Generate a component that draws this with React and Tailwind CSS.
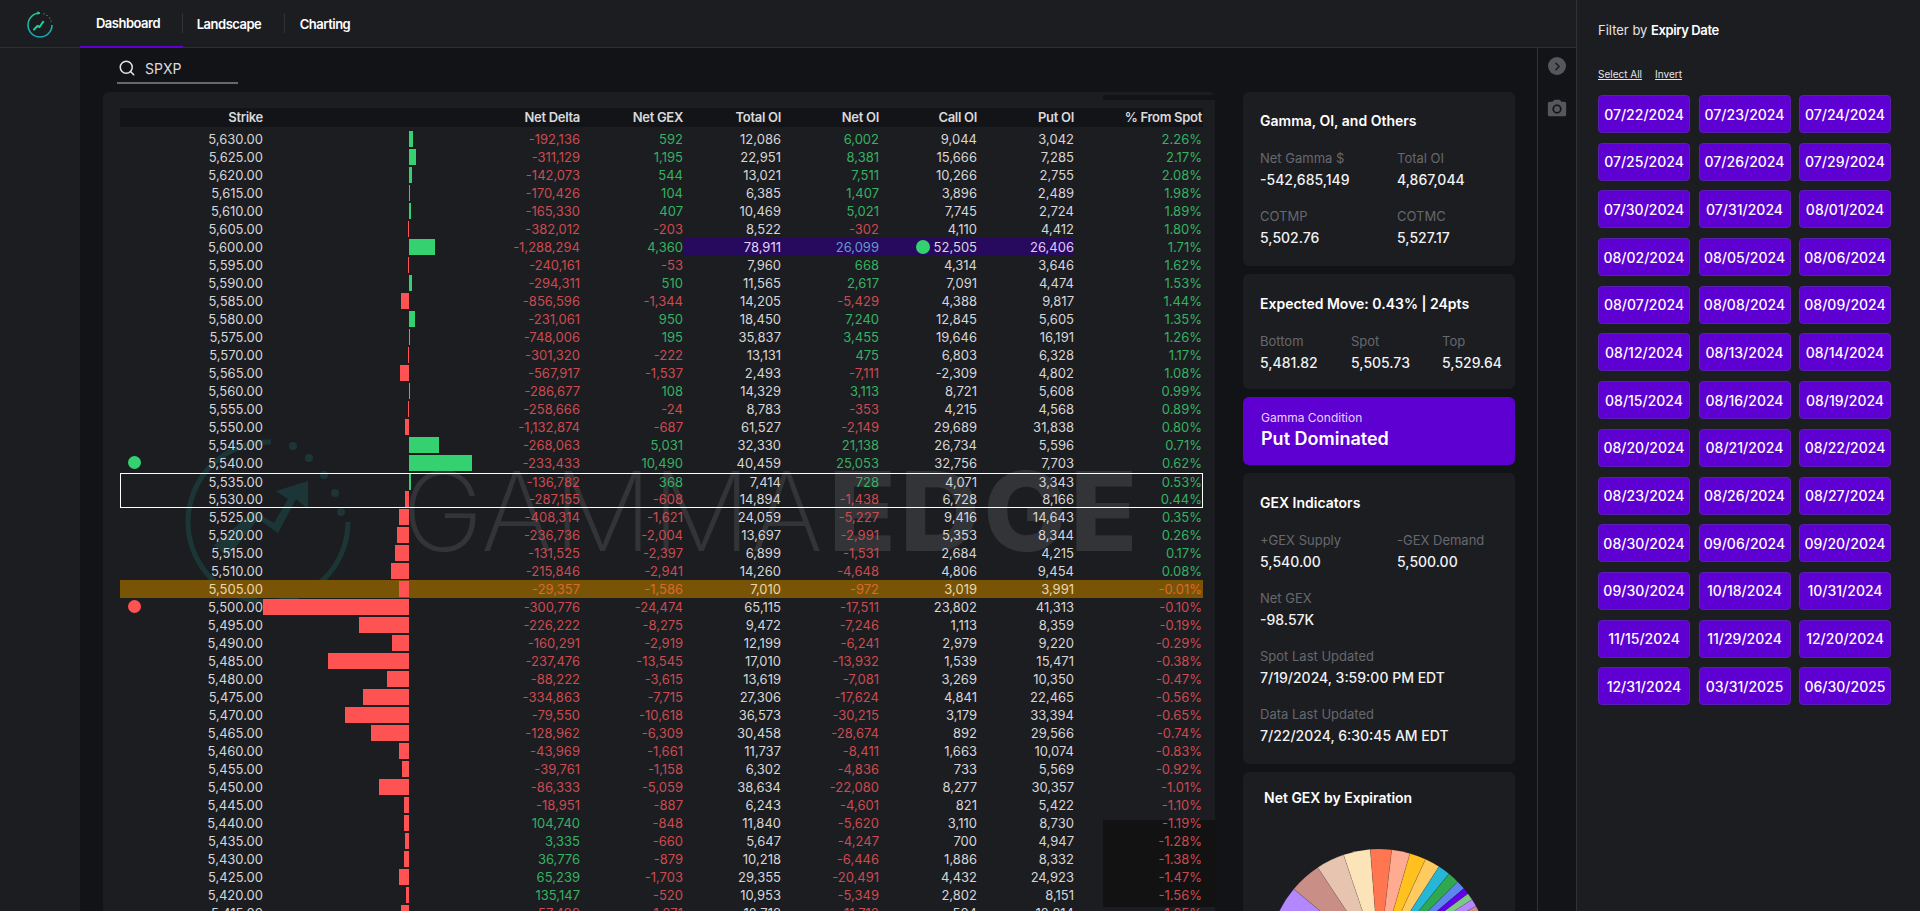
import { Search, ChevronRight } from 'lucide-react';
import { MdPhotoCamera } from 'react-icons/md';

const ROWS = [
  ['5,630.00', '-192,136', '592', '12,086', '6,002', '9,044', '3,042', '2.26%'],
  ['5,625.00', '-311,129', '1,195', '22,951', '8,381', '15,666', '7,285', '2.17%'],
  ['5,620.00', '-142,073', '544', '13,021', '7,511', '10,266', '2,755', '2.08%'],
  ['5,615.00', '-170,426', '104', '6,385', '1,407', '3,896', '2,489', '1.98%'],
  ['5,610.00', '-165,330', '407', '10,469', '5,021', '7,745', '2,724', '1.89%'],
  ['5,605.00', '-382,012', '-203', '8,522', '-302', '4,110', '4,412', '1.80%'],
  ['5,600.00', '-1,288,294', '4,360', '78,911', '26,099', '52,505', '26,406', '1.71%'],
  ['5,595.00', '-240,161', '-53', '7,960', '668', '4,314', '3,646', '1.62%'],
  ['5,590.00', '-294,311', '510', '11,565', '2,617', '7,091', '4,474', '1.53%'],
  ['5,585.00', '-856,596', '-1,344', '14,205', '-5,429', '4,388', '9,817', '1.44%'],
  ['5,580.00', '-231,061', '950', '18,450', '7,240', '12,845', '5,605', '1.35%'],
  ['5,575.00', '-748,006', '195', '35,837', '3,455', '19,646', '16,191', '1.26%'],
  ['5,570.00', '-301,320', '-222', '13,131', '475', '6,803', '6,328', '1.17%'],
  ['5,565.00', '-567,917', '-1,537', '2,493', '-7,111', '-2,309', '4,802', '1.08%'],
  ['5,560.00', '-286,677', '108', '14,329', '3,113', '8,721', '5,608', '0.99%'],
  ['5,555.00', '-258,666', '-24', '8,783', '-353', '4,215', '4,568', '0.89%'],
  ['5,550.00', '-1,132,874', '-687', '61,527', '-2,149', '29,689', '31,838', '0.80%'],
  ['5,545.00', '-268,063', '5,031', '32,330', '21,138', '26,734', '5,596', '0.71%'],
  ['5,540.00', '-233,433', '10,490', '40,459', '25,053', '32,756', '7,703', '0.62%'],
  ['5,535.00', '-136,782', '368', '7,414', '728', '4,071', '3,343', '0.53%'],
  ['5,530.00', '-287,155', '-608', '14,894', '-1,438', '6,728', '8,166', '0.44%'],
  ['5,525.00', '-408,314', '-1,621', '24,059', '-5,227', '9,416', '14,643', '0.35%'],
  ['5,520.00', '-236,736', '-2,004', '13,697', '-2,991', '5,353', '8,344', '0.26%'],
  ['5,515.00', '-131,525', '-2,397', '6,899', '-1,531', '2,684', '4,215', '0.17%'],
  ['5,510.00', '-215,846', '-2,941', '14,260', '-4,648', '4,806', '9,454', '0.08%'],
  ['5,505.00', '-29,357', '-1,586', '7,010', '-972', '3,019', '3,991', '-0.01%'],
  ['5,500.00', '-300,776', '-24,474', '65,115', '-17,511', '23,802', '41,313', '-0.10%'],
  ['5,495.00', '-226,222', '-8,275', '9,472', '-7,246', '1,113', '8,359', '-0.19%'],
  ['5,490.00', '-160,291', '-2,919', '12,199', '-6,241', '2,979', '9,220', '-0.29%'],
  ['5,485.00', '-237,476', '-13,545', '17,010', '-13,932', '1,539', '15,471', '-0.38%'],
  ['5,480.00', '-88,222', '-3,615', '13,619', '-7,081', '3,269', '10,350', '-0.47%'],
  ['5,475.00', '-334,863', '-7,715', '27,306', '-17,624', '4,841', '22,465', '-0.56%'],
  ['5,470.00', '-79,550', '-10,618', '36,573', '-30,215', '3,179', '33,394', '-0.65%'],
  ['5,465.00', '-128,962', '-6,309', '30,458', '-28,674', '892', '29,566', '-0.74%'],
  ['5,460.00', '-43,969', '-1,661', '11,737', '-8,411', '1,663', '10,074', '-0.83%'],
  ['5,455.00', '-39,761', '-1,158', '6,302', '-4,836', '733', '5,569', '-0.92%'],
  ['5,450.00', '-86,333', '-5,059', '38,634', '-22,080', '8,277', '30,357', '-1.01%'],
  ['5,445.00', '-18,951', '-887', '6,243', '-4,601', '821', '5,422', '-1.10%'],
  ['5,440.00', '104,740', '-848', '11,840', '-5,620', '3,110', '8,730', '-1.19%'],
  ['5,435.00', '3,335', '-660', '5,647', '-4,247', '700', '4,947', '-1.28%'],
  ['5,430.00', '36,776', '-879', '10,218', '-6,446', '1,886', '8,332', '-1.38%'],
  ['5,425.00', '65,239', '-1,703', '29,355', '-20,491', '4,432', '24,923', '-1.47%'],
  ['5,420.00', '135,147', '-520', '10,953', '-5,349', '2,802', '8,151', '-1.56%'],
  ['5,415.00', '-57,499', '-1,271', '12,718', '-11,710', '504', '12,214', '-1.65%'],
];

const DATES = [
  '07/22/2024', '07/23/2024', '07/24/2024', '07/25/2024', '07/26/2024', '07/29/2024',
  '07/30/2024', '07/31/2024', '08/01/2024', '08/02/2024', '08/05/2024', '08/06/2024',
  '08/07/2024', '08/08/2024', '08/09/2024', '08/12/2024', '08/13/2024', '08/14/2024',
  '08/15/2024', '08/16/2024', '08/19/2024', '08/20/2024', '08/21/2024', '08/22/2024',
  '08/23/2024', '08/26/2024', '08/27/2024', '08/30/2024', '09/06/2024', '09/20/2024',
  '09/30/2024', '10/18/2024', '10/31/2024', '11/15/2024', '11/29/2024', '12/20/2024',
  '12/31/2024', '03/31/2025', '06/30/2025',
];

// angle in degrees from 12 o'clock, then the slice colour up to the next angle
const SLICES = [
  [-72, '#b388ff'], [-50.2, '#c98e85'], [-33.5, '#e6c4b0'], [-18.6, '#fce4b8'],
  [-4.5, '#ff7650'], [6.6, '#ffab91'], [16.2, '#ffc020'], [24.8, '#ffca5f'],
  [32.7, '#26b6d6'], [39.1, '#2fa84f'], [45.1, '#5c85f0'], [49.9, '#6200ea'],
  [53.3, '#81c784'], [57, '#b388ff'], [61, '#c98e85'], [70, '#c98e85'],
];

const GRID = 'grid grid-cols-[143px_146px_91px_80px_103px_98px_98px_98px_97px_128px]';

function gexNumber(text) {
  return parseInt(text.replace(/,/g, ''), 10);
}

function pointOnPie(deg) {
  const rad = (deg * Math.PI) / 180;
  return `${111 + 111 * Math.sin(rad)} ${111 - 111 * Math.cos(rad)}`;
}

function Row({ row, className = '' }) {
  const [strike, delta, gex, total, netOi, call, put, pct] = row;
  const value = gexNumber(gex);
  const width = Math.max(1, Math.abs(value) * 0.006);
  const isCallWall = strike === '5,600.00';
  const isSpot = strike === '5,505.00';
  const plain = isSpot ? 'text-[#e8d8ac]' : 'text-[#d6d6d8]';
  const tone = (text) => {
    if (isSpot) return 'text-[#d96a2c]';
    return text.startsWith('-') ? 'text-[#cb4b50]' : 'text-[#35b261]';
  };
  const band = isCallWall ? 'bg-[#27095e]' : '';

  return (
    <div className={`${GRID} relative h-[18px] text-[13px] leading-[18px] text-right ${isSpot ? 'bg-[#7a5406]' : ''} ${className}`}>
      <div className={`flex items-center justify-between ${plain}`}>
        {strike === '5,540.00' && <span className="ml-[8px] -mt-[2px] h-[13px] w-[13px] rounded-full bg-[#35d170]" />}
        {strike === '5,500.00' && <span className="ml-[8px] -mt-[2px] h-[13px] w-[13px] rounded-full bg-[#ff5252]" />}
        <span className="ml-auto">{strike}</span>
      </div>
      <div className="flex items-center justify-end">
        {value < 0 && <div className="h-[16px] bg-[#ff5252]" style={{ width }} />}
      </div>
      <div className="flex items-center justify-start">
        {value > 0 && <div className="h-[16px] bg-[#35d170]" style={{ width }} />}
      </div>
      <div className={tone(delta)}>{delta}</div>
      <div className={tone(gex)}>{gex}</div>
      <div className={`${band} ${isCallWall ? 'text-[#e4d4f8]' : plain}`}>{total}</div>
      <div className={`${band} ${isCallWall ? 'text-[#5f9ccf]' : tone(netOi)}`}>{netOi}</div>
      <div className={`${band} ${plain} flex items-center justify-end`}>
        {isCallWall && <span className="mr-[4px] h-[14px] w-[14px] rounded-full bg-[#35d170]" />}
        {call}
      </div>
      <div className={`${band} ${isCallWall ? 'text-[#e0c8fb]' : plain}`}>{put}</div>
      <div className={tone(pct)}>{pct}</div>
    </div>
  );
}

function Stat({ label, value }) {
  return (
    <div>
      <div className="h-[18px] text-[13px] leading-[18px] text-[#66686e]">{label}</div>
      <div className="mt-[3px] h-[20px] text-[14px] font-medium leading-[20px] text-[#f2f2f3]">{value}</div>
    </div>
  );
}

function Logo() {
  return (
    <svg width="30" height="32" viewBox="0 0 30 32" fill="none">
      <defs>
        <linearGradient id="ring" x1="0" y1="0" x2="0" y2="1">
          <stop offset="0" stopColor="#1fd09a" />
          <stop offset="1" stopColor="#12a7b8" />
        </linearGradient>
      </defs>
      <path d="M15 5a12 12 0 1 0 12 12" stroke="url(#ring)" strokeWidth="1.5" />
      <path d="M15 5l-2.5-2v4z" fill="#1fd09a" />
      <path d="M19 5.8l.1 0M22 7.5l.1 0M24.5 10l.1 0M26 13l.1 0" stroke="#1ac0a0" strokeWidth="1.2" strokeLinecap="round" />
      <path d="M9 21.5l3.5-3.5 2 1 3.5-5" stroke="#1fd09a" strokeWidth="2" strokeLinecap="round" />
      <path d="M18 12.5l1.5 1.5-2.5 1z" fill="#1fd09a" />
    </svg>
  );
}

function Watermark() {
  return (
    <div className="absolute left-[80px] top-[345px] flex items-center">
      <svg width="170" height="170" viewBox="0 0 170 170" fill="none" className="opacity-40">
        <path d="M88 5A80 80 0 1 0 165 85" stroke="#1c5d5a" strokeWidth="5" />
        <circle cx="110" cy="9" r="4" fill="#1c5d5a" />
        <circle cx="126" cy="21" r="4" fill="#1c5d5a" />
        <circle cx="141" cy="38" r="4" fill="#1c5d5a" />
        <circle cx="152" cy="56" r="4" fill="#1c5d5a" />
        <circle cx="158" cy="75" r="4" fill="#1c5d5a" />
        <path d="M45 120l30-38 20 14 18-34 12 10 0-28-32 10 12 8-14 24-20-12-40 34z" fill="#1c5d5a" />
      </svg>
      <div className="absolute left-[219px] top-[19px] flex whitespace-nowrap text-[110px] leading-[110px] text-white/10">
        <span className="font-extralight">GAMMA</span>
        <span className="ml-[6px] font-extrabold tracking-[4px]">EDGE</span>
      </div>
    </div>
  );
}

function StrikeTable() {
  return (
    <div className="relative h-[819px] w-[1112px] shrink-0 overflow-hidden rounded-t-md bg-[#1c1d21] pl-[17px] pt-[16px]">
      <div className="absolute right-0 top-[3px] h-[5px] w-[112px] bg-[#121317]" />
      <div className="absolute right-0 top-[728px] h-[87px] w-[112px] bg-[#121213]" />
      <Watermark />
      <div className={`${GRID} relative h-[19px] w-[1083px] bg-[#131417] text-[13px] font-semibold leading-[19px] tracking-[-0.3px] text-right text-[#d9d9db]`}>
        <div>Strike</div>
        <div />
        <div />
        <div>Net Delta</div>
        <div>Net GEX</div>
        <div>Total OI</div>
        <div>Net OI</div>
        <div>Call OI</div>
        <div>Put OI</div>
        <div>% From Spot</div>
      </div>
      <div className="relative mt-[3px] w-[1083px]">
        {ROWS.slice(0, 19).map((row) => <Row key={row[0]} row={row} />)}
        <div className="outline outline-1 -outline-offset-1 outline-white">
          <Row row={ROWS[19]} className="mt-px" />
          <Row row={ROWS[20]} className="-mt-px" />
        </div>
        {ROWS.slice(21).map((row) => <Row key={row[0]} row={row} />)}
      </div>
    </div>
  );
}

function SideCards() {
  return (
    <div className="flex w-[272px] shrink-0 flex-col gap-[8px]">
      <div className="h-[174px] rounded-md bg-[#1c1d21] px-[17px] pt-[19px]">
        <div className="text-[14px] font-semibold leading-[20px] text-white">Gamma, OI, and Others</div>
        <div className="mt-[18px] grid grid-cols-[137px_1fr] gap-y-[17px]">
          <Stat label="Net Gamma $" value="-542,685,149" />
          <Stat label="Total OI" value="4,867,044" />
          <Stat label="COTMP" value="5,502.76" />
          <Stat label="COTMC" value="5,527.17" />
        </div>
      </div>
      <div className="h-[115px] rounded-md bg-[#1c1d21] px-[17px] pt-[20px]">
        <div className="text-[14px] font-semibold leading-[20px] text-white">Expected Move: 0.43% | 24pts</div>
        <div className="mt-[18px] grid grid-cols-[91px_91px_1fr]">
          <Stat label="Bottom" value="5,481.82" />
          <Stat label="Spot" value="5,505.73" />
          <Stat label="Top" value="5,529.64" />
        </div>
      </div>
      <div className="h-[68px] rounded-md bg-[#5e00d2] px-[18px] pt-[12px]">
        <div className="text-[12px] leading-[18px] text-[#e6d6fb]">Gamma Condition</div>
        <div className="mt-[1px] text-[18px] font-semibold leading-[22px] text-white">Put Dominated</div>
      </div>
      <div className="h-[291px] rounded-md bg-[#1c1d21] px-[17px] pt-[20px]">
        <div className="text-[14px] font-semibold leading-[20px] text-white">GEX Indicators</div>
        <div className="mt-[18px] grid grid-cols-[137px_1fr]">
          <Stat label="+GEX Supply" value="5,540.00" />
          <Stat label="-GEX Demand" value="5,500.00" />
        </div>
        <div className="mt-[17px] flex flex-col gap-[17px]">
          <Stat label="Net GEX" value="-98.57K" />
          <Stat label="Spot Last Updated" value="7/19/2024, 3:59:00 PM EDT" />
          <Stat label="Data Last Updated" value="7/22/2024, 6:30:45 AM EDT" />
        </div>
      </div>
      <div className="h-[140px] overflow-hidden rounded-t-md bg-[#1c1d21] pt-[16px]">
        <div className="pl-[21px] text-[14px] font-semibold leading-[20px] text-white">Net GEX by Expiration</div>
        <svg width="222" height="222" viewBox="0 0 222 222" className="mx-auto mt-[41px]">
          {SLICES.slice(0, -1).map(([start, color], i) => (
            <path
              key={i}
              d={`M111 111L${pointOnPie(start)}A111 111 0 0 1 ${pointOnPie(SLICES[i + 1][0])}Z`}
              fill={color}
              stroke="#00000030"
              strokeWidth="0.5"
            />
          ))}
        </svg>
      </div>
    </div>
  );
}

export default function App() {
  return (
    <div className="flex h-screen w-full overflow-hidden bg-[#1c1d21] font-[Inter,sans-serif] text-white">
      <div className="flex w-[1577px] shrink-0 flex-col border-r border-[#303136]">
        {/* Top nav */}
        <header className="flex h-[48px] shrink-0 border-b border-[#2e2f33]">
          <div className="flex w-[80px] items-center justify-center">
            <Logo />
          </div>
          <div className="relative -mb-px flex h-[48px] w-[103px] items-center justify-center border-b-2 border-[#5e00d2] pr-[7px] pt-[2px] text-[13px] font-semibold tracking-[-0.5px]">
            Dashboard
            <span className="absolute right-0 top-[13px] h-[20px] w-px bg-[#303136]" />
          </div>
          <div className="relative flex w-[102px] items-center justify-center pr-[10px] pt-[2px] text-[13px] font-semibold tracking-[-0.5px]">
            Landscape
            <span className="absolute right-0 top-[13px] h-[20px] w-px bg-[#303136]" />
          </div>
          <div className="flex w-[82px] items-center justify-center pr-[2px] pt-[2px] text-[13px] font-semibold tracking-[-0.5px]">Charting</div>
        </header>

        <div className="flex min-h-0 flex-1">
          <div className="w-[80px] shrink-0" />
          <main className="min-w-0 flex-1 overflow-hidden bg-[#121317]">
            <div className="ml-[37px] flex h-[36px] w-[121px] items-center gap-[9px] border-b-2 border-[#66686c] pl-[1px] pt-[6px]">
              <Search size={18} strokeWidth={2} className="text-[#e4e4e6]" />
              <span className="text-[14px] text-[#dcdcde]">SPXP</span>
            </div>
            <div className="ml-[23px] mt-[8px] flex gap-[28px]">
              <StrikeTable />
              <SideCards />
            </div>
          </main>
          <div className="flex w-[39px] shrink-0 flex-col items-center border-l border-[#303136] bg-[#131417] pt-[9px]">
            <div className="flex h-[18px] w-[18px] items-center justify-center rounded-full bg-[#55575c]">
              <ChevronRight size={13} strokeWidth={3} className="text-[#1c1d21]" />
            </div>
            <MdPhotoCamera size={22} className="mt-[23px] text-[#55575c]" />
          </div>
        </div>
      </div>

      {/* Expiry filter */}
      <aside className="flex-1 pl-[21px] pt-[21px]">
        <div className="text-[13px] leading-[18px] text-[#e4e4e6]">
          Filter by <span className="font-semibold tracking-[-0.4px] text-white">Expiry Date</span>
        </div>
        <div className="mt-[26px] flex h-[18px] items-center gap-[13px] text-[10px] text-[#e4e4e6] underline">
          <span>Select All</span>
          <span>Invert</span>
        </div>
        <div className="mt-[12px] grid grid-cols-[92px_92px_92px] gap-x-[8.5px] gap-y-[9.7px]">
          {DATES.map((date) => (
            <button
              key={date}
              className="h-[38px] rounded-sm border border-[#5a1fb0] bg-[#5e00d2] text-[14px] font-medium text-white"
            >
              {date}
            </button>
          ))}
        </div>
      </aside>
    </div>
  );
}
